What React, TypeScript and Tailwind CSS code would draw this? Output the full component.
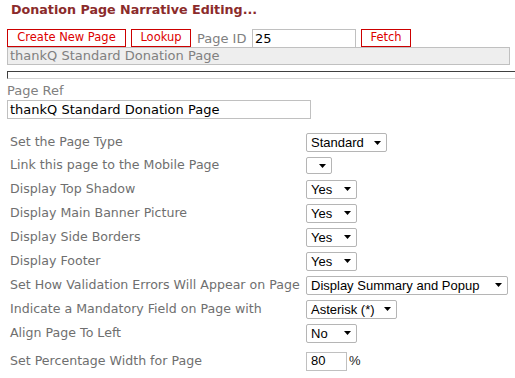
import React from "react";

const Arrow = () => (
  <svg width="7" height="4" viewBox="0 0 7 4" className="block">
    <polygon points="0,0 7,0 3.5,4" fill="#000" />
  </svg>
);

function Sel({ w, text, h = 19 }: { w: number; text: string; h?: number }) {
  return (
    <div
      className="flex items-center justify-between border border-[#b5b5b5] rounded-[2px] bg-white pl-[4px] pr-[5px] font-['Liberation_Sans',Arial,sans-serif] text-[13px] text-black leading-none"
      style={{ width: w, height: h }}
    >
      <span>{text}</span>
      <Arrow />
    </div>
  );
}

const rows: { label: string; w: number; text: string; h: number; sh?: number }[] = [
  { label: "Set the Page Type", w: 81, text: "Standard", h: 23 },
  { label: "Link this page to the Mobile Page", w: 26, text: "", h: 23, sh: 17 },
  { label: "Display Top Shadow", w: 51, text: "Yes", h: 24 },
  { label: "Display Main Banner Picture", w: 51, text: "Yes", h: 24 },
  { label: "Display Side Borders", w: 51, text: "Yes", h: 24 },
  { label: "Display Footer", w: 51, text: "Yes", h: 24 },
  { label: "Set How Validation Errors Will Appear on Page", w: 202, text: "Display Summary and Popup", h: 24 },
  { label: "Indicate a Mandatory Field on Page with", w: 91, text: "Asterisk (*)", h: 24 },
  { label: "Align Page To Left", w: 51, text: "No", h: 24 },
];

export default function App() {
  return (
    <div className="w-[515px] h-[378px] overflow-hidden bg-white font-['DejaVu_Sans',Verdana,sans-serif]">
      <div className="pl-[11px] pt-[3px] h-[29px] text-[12.7px] leading-[14px] font-bold text-[#8b2b2b]">
        Donation Page Narrative Editing...
      </div>
      <div className="pl-[7px]">
        <div className="flex items-start h-[19px]">
          <div className="w-[119px] h-[18px] border border-[#cc0000] text-[#dd0000] text-[11.5px] flex items-center justify-center">
            Create New Page
          </div>
          <div className="ml-[5px] w-[60px] h-[18px] border border-[#cc0000] text-[#dd0000] text-[11.5px] flex items-center justify-center">
            Lookup
          </div>
          <div className="ml-[6px] w-[55px] h-[19px] text-[13px] text-[#808080] flex items-center">Page ID</div>
          <div className="w-[104px] h-[19px] border border-[#c0c0c0] text-[13px] text-black flex items-center pl-[2px]">
            25
          </div>
          <div className="ml-[5px] w-[50px] h-[18px] border border-[#cc0000] text-[#dd0000] text-[11.5px] flex items-center justify-center">
            Fetch
          </div>
        </div>
        <div className="w-[503px] h-[18px] -mt-[1px] border border-[#c0c0c0] bg-[#eeeeee] text-[13px] text-[#808080] flex items-center pl-[2px]">
          thankQ Standard Donation Page
        </div>
        <div className="mt-[6px] w-[520px] h-[8px] border-t border-l border-t-[#404040] border-l-[#404040] border-b border-b-[#d4d4d4]" />
        <div className="mt-[2px] h-[19px] text-[13px] text-[#808080] flex items-center">Page Ref</div>
        <div className="w-[304px] h-[19px] border border-[#c0c0c0] text-[13px] text-black flex items-center pl-[2px]">
          thankQ Standard Donation Page
        </div>
      </div>
      <div className="mt-[12px] pl-[10px]">
        {rows.map((r, i) => (
          <div key={i} className="flex items-center" style={{ height: r.h }}>
            <div className="w-[296px] text-[12.6px] text-[#6f6f6f]">{r.label}</div>
            <Sel w={r.w} text={r.text} h={r.sh ?? 19} />
          </div>
        ))}
        <div className="flex items-center h-[24px] mt-[4px]">
          <div className="w-[296px] text-[12.6px] text-[#6f6f6f]">Set Percentage Width for Page</div>
          <div className="w-[41px] h-[19px] border border-[#c0c0c0] font-['Liberation_Sans',Arial,sans-serif] text-[13px] text-black flex items-center pl-[4px]">
            80
          </div>
          <span className="ml-[2px] font-['Liberation_Sans',Arial,sans-serif] text-[13px] text-[#222]">%</span>
        </div>
      </div>
    </div>
  );
}
